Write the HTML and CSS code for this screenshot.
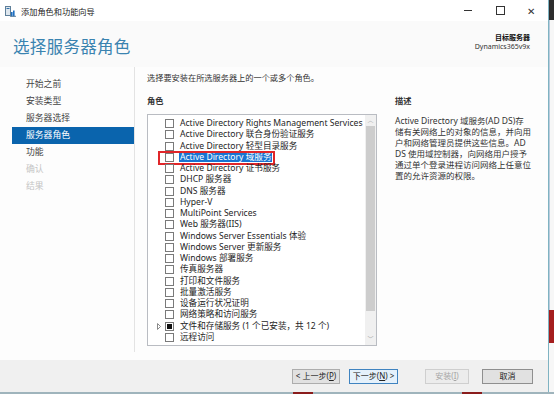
FILE: index.html
```html
<!DOCTYPE html>
<html lang="zh-CN">
<head>
  <meta charset="UTF-8" />
  <title>添加角色和功能向导</title>
  <link rel="stylesheet" href="styles.css">
</head>
<body>

<div class="screen">
  <div class="window">
    <div class="titlebar">
      <svg class="app-icon" width="11" height="11" viewBox="0 0 11 11">
        <rect x="0.5" y="0.5" width="5" height="9" fill="#dfe7ee" stroke="#5f7f99" />
        <rect x="1.5" y="2" width="3" height="1" fill="#2f6fa8" />
        <rect x="6" y="6" width="1.6" height="4.5" fill="#1f6fc1" />
        <rect x="8" y="4.5" width="1.6" height="6" fill="#1f6fc1" />
        <rect x="5" y="9.8" width="6" height="1" fill="#5f7f99" />
      </svg>
      <span class="title">添加角色和功能向导</span>
      <div class="controls">
        <span class="ctl ctl-min"></span>
        <span class="ctl ctl-max"></span>
        <span class="ctl ctl-close">✕</span>
      </div>
    </div>

    <div class="header">
      <h1>选择服务器角色</h1>
      <div class="target">
        <div class="target-label">目标服务器</div>
        <div>Dynamics365v9x</div>
      </div>
    </div>

    <div class="main">
      <ul class="nav">
        <li>开始之前</li>
        <li>安装类型</li>
        <li>服务器选择</li>
        <li class="active">服务器角色</li>
        <li>功能</li>
        <li class="muted">确认</li>
        <li class="muted">结果</li>
      </ul>

      <div class="content">
        <p class="intro">选择要安装在所选服务器上的一个或多个角色。</p>
        <div class="columns">
          <div class="roles">
            <div class="label">角色</div>
            <div class="listbox">
              <ul class="role-list">
                <li><span class="check"></span><span>Active Directory Rights Management Services</span></li>
                <li><span class="check"></span><span>Active Directory 联合身份验证服务</span></li>
                <li><span class="check"></span><span>Active Directory 轻型目录服务</span></li>
                <li class="picked"><span class="check"></span><span class="sel">Active Directory 域服务</span><span class="mark"></span></li>
                <li><span class="check"></span><span>Active Directory 证书服务</span></li>
                <li><span class="check"></span><span>DHCP 服务器</span></li>
                <li><span class="check"></span><span>DNS 服务器</span></li>
                <li><span class="check"></span><span>Hyper-V</span></li>
                <li><span class="check"></span><span>MultiPoint Services</span></li>
                <li><span class="check"></span><span>Web 服务器(IIS)</span></li>
                <li><span class="check"></span><span>Windows Server Essentials 体验</span></li>
                <li><span class="check"></span><span>Windows Server 更新服务</span></li>
                <li><span class="check"></span><span>Windows 部署服务</span></li>
                <li><span class="check"></span><span>传真服务器</span></li>
                <li><span class="check"></span><span>打印和文件服务</span></li>
                <li><span class="check"></span><span>批量激活服务</span></li>
                <li><span class="check"></span><span>设备运行状况证明</span></li>
                <li><span class="check"></span><span>网络策略和访问服务</span></li>
                <li class="expandable">
                  <svg class="arrow" width="10" height="7" viewBox="0 0 10 7"><path d="M2.5 0.5 L5.5 3.5 L2.5 6.5 Z" fill="none" stroke="#8a8a8a" stroke-width="1" /></svg>
                  <span class="check partial"></span><span>文件和存储服务 (1 个已安装，共 12 个)</span>
                </li>
                <li><span class="check"></span><span>远程访问</span></li>
              </ul>
              <div class="scrollbar">
                <span class="sb-arrow">︿</span>
                <span class="sb-thumb"></span>
                <span class="sb-track"></span>
                <span class="sb-arrow">﹀</span>
              </div>
            </div>
          </div>

          <div class="desc">
            <div class="label">描述</div>
            <p>Active Directory 域服务(AD DS)存<br>储有关网络上的对象的信息，并向用<br>户和网络管理员提供这些信息。AD<br>DS 使用域控制器，向网络用户授予<br>通过单个登录进程访问网络上任意位<br>置的允许资源的权限。</p>
          </div>
        </div>
      </div>
    </div>

    <div class="footer">
      <button class="btn btn-prev">&lt; 上一步(<u>P</u>)</button>
      <button class="btn btn-next">下一步(<u>N</u>) &gt;</button>
      <button class="btn btn-install" disabled>安装(<u>I</u>)</button>
      <button class="btn btn-cancel">取消</button>
    </div>
  </div>

  <div class="edge">
    <span class="edge-top"></span>
    <span class="edge-mid"></span>
    <span class="edge-red"></span>
    <span class="edge-low"></span>
  </div>
</div>

<div class="under">
  <span class="under-red"></span>
  <span class="under-red second"></span>
</div>

</body>
</html>
```

FILE: styles.css
```css
body {
  margin: 0;
  background: #ffffff;
  font-family: "Noto Sans", "Noto Sans CJK SC", sans-serif;
  color: #1e1e1e;
  width: 554px;
  height: 394px;
  overflow: hidden;
}

.screen {
  display: flex;
  height: 392px;
}

.window {
  width: 548px;
  border-right: 1px solid #7fb3c2;
  display: flex;
  flex-direction: column;
  background: #fdfdfd;
}

/* title bar */
.titlebar {
  height: 21px;
  display: flex;
  align-items: center;
  padding-left: 5px;
  background: #ffffff;
}

.app-icon {
  margin-right: 5px;
  margin-top: 2px;
}

.title {
  font-size: 8.2px;
  color: #222;
}

.controls {
  margin-left: auto;
  display: flex;
  align-items: center;
  height: 21px;
}

.ctl {
  width: 32px;
  height: 21px;
  display: flex;
  align-items: center;
  justify-content: center;
}

.ctl-min::before {
  content: "";
  width: 8px;
  height: 1px;
  background: #333;
}

.ctl-max::before {
  content: "";
  width: 7px;
  height: 7px;
  border: 1px solid #333;
}

.ctl-close {
  font-size: 10px;
  color: #333;
  width: 30px;
  margin-right: 2px;
}

/* header */
.header {
  height: 46px;
  display: flex;
  align-items: center;
  padding: 0 18px 0 13px;
  background: #fafafa;
}

.header h1 {
  margin: 4px 0 0;
  font-size: 16.6px;
  font-weight: normal;
  color: #3a83b0;
  letter-spacing: 0.2px;
}

.target {
  margin-left: auto;
  text-align: right;
  font-size: 7px;
  line-height: 9px;
  color: #333;
  margin-top: -4px;
}

.target-label {
  font-weight: bold;
  color: #111;
}

/* main area */
.main {
  flex: 1;
  display: flex;
  background: #fdfdfd;
}

.nav {
  list-style: none;
  margin: 0 0 8px;
  padding: 9px 0 0 12px;
  width: 122px;
  border-right: 1px solid #e3e3e3;
  font-size: 8.8px;
  color: #444;
}

.nav li {
  height: 17px;
  line-height: 17px;
  padding-left: 14px;
}

.nav li.active {
  background: #0a64ad;
  color: #ffffff;
}

.nav li.muted {
  color: #c4c4c4;
}

.content {
  flex: 1;
  padding: 6px 0 0 12px;
}

.intro {
  margin: 0;
  font-size: 8.2px;
  line-height: 10px;
  color: #333;
}

.columns {
  display: flex;
  margin-top: 13px;
}

.roles {
  width: 230px;
}

.label {
  font-size: 8.2px;
  line-height: 10px;
  font-weight: bold;
  color: #333;
}

.listbox {
  margin-top: 8px;
  height: 230px;
  border: 1px solid #b9bcc2;
  background: #ffffff;
  display: flex;
}

.role-list {
  list-style: none;
  margin: 0;
  padding: 3px 0 0 17px;
  flex: 1;
  font-size: 8.6px;
}

.role-list li {
  height: 11.25px;
  line-height: 11.25px;
  display: flex;
  align-items: center;
  white-space: nowrap;
  position: relative;
}

.check {
  width: 7px;
  height: 7px;
  border: 1px solid #7a7a7a;
  background: #fff;
  margin-right: 6px;
  flex: none;
  display: flex;
  align-items: center;
  justify-content: center;
}

.check.partial::before {
  content: "";
  width: 5px;
  height: 5px;
  background: #111;
}

.expandable {
  margin-left: -10px;
}

.arrow {
  flex: none;
}

.sel {
  background: #1874d2;
  color: #ffffff;
  padding: 0 1px;
  margin-left: -1px;
  line-height: 10px;
}

/* red annotation box drawn over the row */
.mark {
  position: absolute;
  left: -7px;
  top: -1px;
  width: 113px;
  height: 10px;
  border: 2px solid #e0262a;
}

.scrollbar {
  width: 11px;
  background: #f0f0f0;
  display: flex;
  flex-direction: column;
  align-items: center;
}

.sb-arrow {
  height: 11px;
  font-size: 6px;
  line-height: 11px;
  color: #a8a8a8;
}

.sb-thumb {
  width: 9px;
  height: 185px;
  background: #cdcdcd;
}

.sb-track {
  flex: 1;
}

.desc {
  padding-left: 18px;
}

.desc p {
  margin: 9px 0 0;
  font-size: 8.5px;
  line-height: 11px;
  color: #333;
  white-space: nowrap;
}

/* footer */
.footer {
  height: 32px;
  background: #f0f0f0;
  display: flex;
  align-items: center;
  padding-left: 292px;
}

.btn {
  height: 15px;
  padding: 0;
  font-family: inherit;
  font-size: 8px;
  line-height: 12px;
  background: #e1e1e1;
  border: 1px solid #adadad;
  color: #222;
  margin: 0;
}

.btn-prev {
  width: 48px;
}

.btn-next {
  width: 49px;
  margin-left: 9px;
  border-color: #3f83c0;
  background: #e5f1fb;
}

.btn-install {
  width: 44px;
  margin-left: 27px;
  color: #a6a6a6;
  border-color: #cfcfcf;
  background: #ececec;
}

.btn-cancel {
  width: 51px;
  margin-left: 13px;
  border-color: #8f8f8f;
}

/* background window visible at the right and bottom */
.edge {
  flex: 1;
  display: flex;
  flex-direction: column;
  background: #f7f7f7;
}

.edge-top {
  height: 20px;
  background: #2d2d2d;
}

.edge-mid {
  height: 290px;
  border-left: 1px solid #bcd;
}

.edge-red {
  height: 33px;
  background: #a51d1d;
}

.edge-low {
  flex: 1;
}

.under {
  height: 2px;
  background: #9fb4bc;
  display: flex;
}

.under-red {
  width: 20px;
  margin-left: 293px;
  background: #8a1c1c;
}

.under-red.second {
  margin-left: 149px;
}
```
